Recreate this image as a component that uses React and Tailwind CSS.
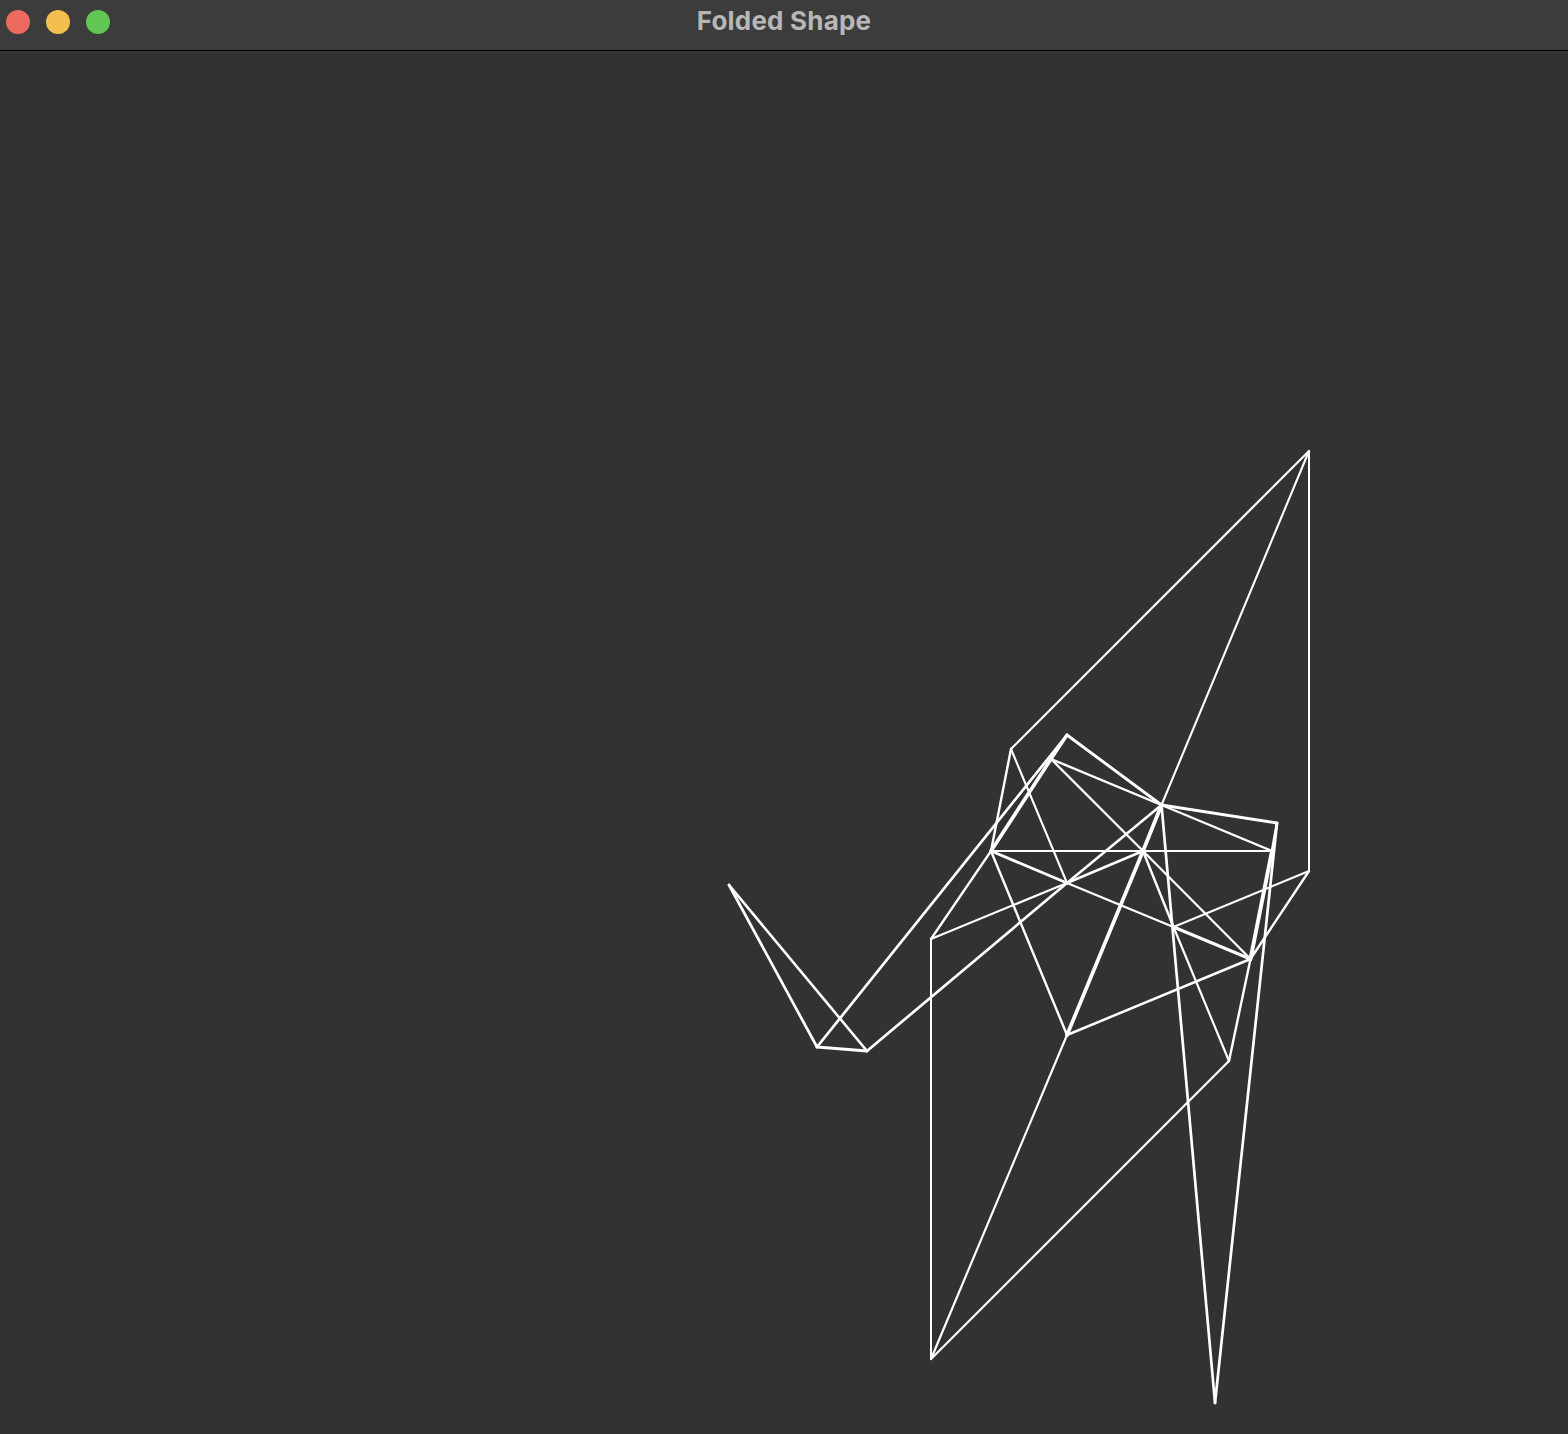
const P = {
  A: [1309, 451], B: [1011, 749], C: [1309, 871], D: [931, 939], E: [931, 1359],
  F: [1229, 1061], G: [1067, 735], H: [1051, 759], I: [1161.5, 805], J: [1277, 823],
  K: [1272, 851], L: [991, 851], M: [1143, 851], N: [1067, 883], O: [1173.5, 927],
  Q: [1250.5, 959], R: [1067, 1035], S: [1215, 1403], T: [817, 1047], U: [867, 1051],
  V: [729, 885],
};

const EDGES = [
  ["AB", 2.2], ["AC", 2], ["AI", 2.1], ["BL", 2.4], ["BN", 2.1],
  ["GI", 2.9], ["HI", 2.4], ["HM", 2.3], ["GH", 3.2], ["HL", 3.6], ["LD", 2.3],
  ["GT", 2.7], ["LK", 2], ["LN", 2.8], ["NO", 2.4], ["OQ", 3], ["LR", 2.4],
  ["NM", 2.5], ["DN", 2.2], ["IN", 2.6], ["NU", 2.7], ["IM", 3.8], ["MR", 3.7],
  ["MO", 2.4], ["OF", 2.2], ["MQ", 2.3], ["QR", 2.5], ["QF", 2.4], ["QK", 3.9],
  ["KJ", 2.7], ["QC", 2.4], ["CO", 2.1], ["IS", 2.7], ["JS", 2.7], ["IJ", 2.8],
  ["IK", 2.4], ["RE", 2.2], ["ED", 2], ["EF", 2.2], ["TU", 2.8], ["VT", 2.7], ["VU", 2.6],
];

function Wireframe() {
  return (
    <svg className="block h-full w-full" viewBox="0 52 1568 1382" stroke="#fff" strokeLinecap="round" aria-label="Folded Shape">
      {EDGES.map(([edge, width]) => {
        const [x1, y1] = P[edge[0]];
        const [x2, y2] = P[edge[1]];
        return <line key={edge} x1={x1} y1={y1} x2={x2} y2={y2} strokeWidth={width} />;
      })}
    </svg>
  );
}

export default function App() {
  return (
    <div className="flex h-[1434px] w-[1568px] flex-col overflow-hidden bg-[#323232]">
      <header className="grid h-[52px] shrink-0 grid-cols-[1fr_auto_1fr] border-b border-[#373737] bg-[#3c3c3c]">
        <div className="col-span-3 grid h-[51px] grid-cols-[1fr_auto_1fr] border-b border-black">
          <div className="flex gap-4 pt-2.5 pl-1.5">
            <span className="size-6 rounded-full bg-[#ed6a5f]" />
            <span className="size-6 rounded-full bg-[#f5bf4f]" />
            <span className="size-6 rounded-full bg-[#62c655]" />
          </div>
          <h1 className="pt-[5px] font-['Inter',sans-serif] text-[26px] leading-8 font-bold tracking-[0.2px] text-[#b7b7b7]">
            Folded Shape
          </h1>
          <div />
        </div>
      </header>
      <main className="min-h-0 flex-1">
        <Wireframe />
      </main>
    </div>
  );
}
